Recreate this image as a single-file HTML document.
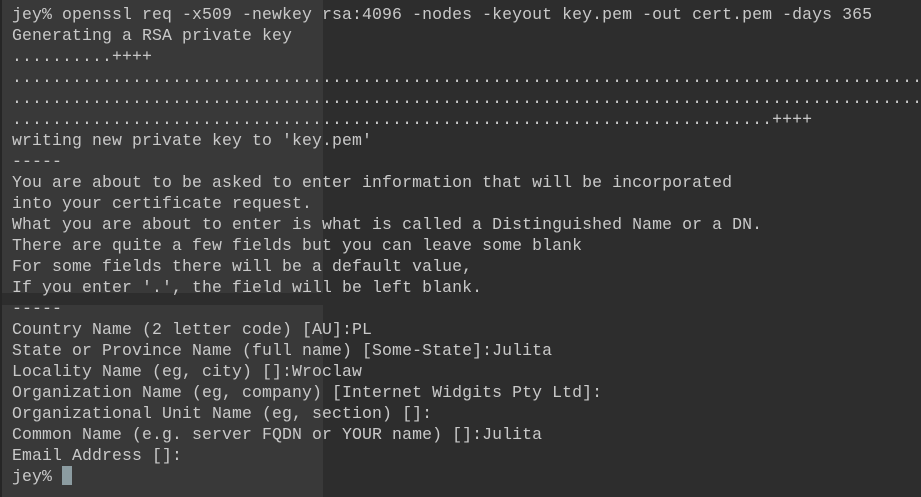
<!DOCTYPE html>
<html><head><meta charset="utf-8"><style>
html,body{margin:0;padding:0;width:921px;height:497px;overflow:hidden;background:#2d2d2d;}
.bg1{position:absolute;left:2px;top:0;width:321px;height:293px;background:#393939;}
.bg2{position:absolute;left:2px;top:305px;width:321px;height:192px;background:#393939;}
.edge{position:absolute;left:0;top:0;width:2px;height:497px;background:#262626;}
pre{position:absolute;left:12px;top:4px;margin:0;font-family:"Liberation Mono",monospace;font-size:16.5px;line-height:21px;letter-spacing:0.1px;color:#c9c9c9;white-space:pre;width:909px;overflow:hidden;}
.cur{display:inline-block;width:10px;height:19px;background:#8c9ca1;vertical-align:-4px;}
</style></head><body>
<div class="bg1"></div><div class="bg2"></div><div class="edge"></div>
<pre>jey% openssl req -x509 -newkey rsa:4096 -nodes -keyout key.pem -out cert.pem -days 365
Generating a RSA private key
..........++++
................................................................................................
................................................................................................
............................................................................++++
writing new private key to 'key.pem'
-----
You are about to be asked to enter information that will be incorporated
into your certificate request.
What you are about to enter is what is called a Distinguished Name or a DN.
There are quite a few fields but you can leave some blank
For some fields there will be a default value,
If you enter '.', the field will be left blank.
-----
Country Name (2 letter code) [AU]:PL
State or Province Name (full name) [Some-State]:Julita
Locality Name (eg, city) []:Wroclaw
Organization Name (eg, company) [Internet Widgits Pty Ltd]:
Organizational Unit Name (eg, section) []:
Common Name (e.g. server FQDN or YOUR name) []:Julita
Email Address []:
jey% <span class="cur"></span></pre>
</body></html>
